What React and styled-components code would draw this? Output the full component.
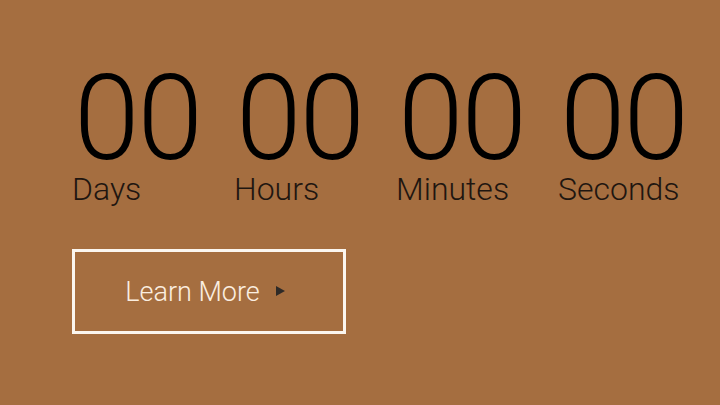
import React from "react";
import styled, { createGlobalStyle } from "styled-components";

const GlobalStyles = createGlobalStyle`
  html, body {
    margin: 0;
    padding: 0;
    background: #a56e40;
  }
  body {
    font-family: Roboto, "Liberation Sans", sans-serif;
  }
`;

const Page = styled.div`
  width: 720px;
  height: 405px;
  background: #a56e40;
  padding: 69px 0 0 72px;
  box-sizing: border-box;
  overflow: hidden;
`;

const Counter = styled.div`
  display: flex;
`;

const Unit = styled.div`
  width: 162px;
  display: flex;
  flex-direction: column;
`;

const Digits = styled.div`
  font-size: 118px;
  font-weight: 300;
  line-height: 100px;
  color: #000;
  letter-spacing: -2px;
  margin-left: 2px;
`;

const Label = styled.div`
  font-size: 32px;
  font-weight: 300;
  line-height: 32px;
  color: #1f1610;
  margin-top: 4px;
`;

const Button = styled.button`
  margin-top: 44px;
  width: 274px;
  height: 85px;
  border: 3px solid #fbf6ef;
  background: transparent;
  display: flex;
  align-items: center;
  justify-content: center;
  gap: 16px;
  box-sizing: border-box;
  font-family: Roboto, "Liberation Sans", sans-serif;
  font-size: 27px;
  font-weight: 300;
  color: #fbeee0;
  padding: 0 8px 0 0;
  cursor: pointer;
`;

const Arrow = styled.span`
  width: 0;
  height: 0;
  border-top: 5px solid transparent;
  border-bottom: 5px solid transparent;
  border-left: 9px solid #2e2a27;
  margin-top: -2px;
`;

const units = ["Days", "Hours", "Minutes", "Seconds"];

const App = () => {
  return (
    <Page>
      <GlobalStyles />
      <Counter>
        {units.map((u) => (
          <Unit key={u}>
            <Digits>00</Digits>
            <Label>{u}</Label>
          </Unit>
        ))}
      </Counter>
      <Button>
        Learn More
        <Arrow />
      </Button>
    </Page>
  );
};

export default App;
